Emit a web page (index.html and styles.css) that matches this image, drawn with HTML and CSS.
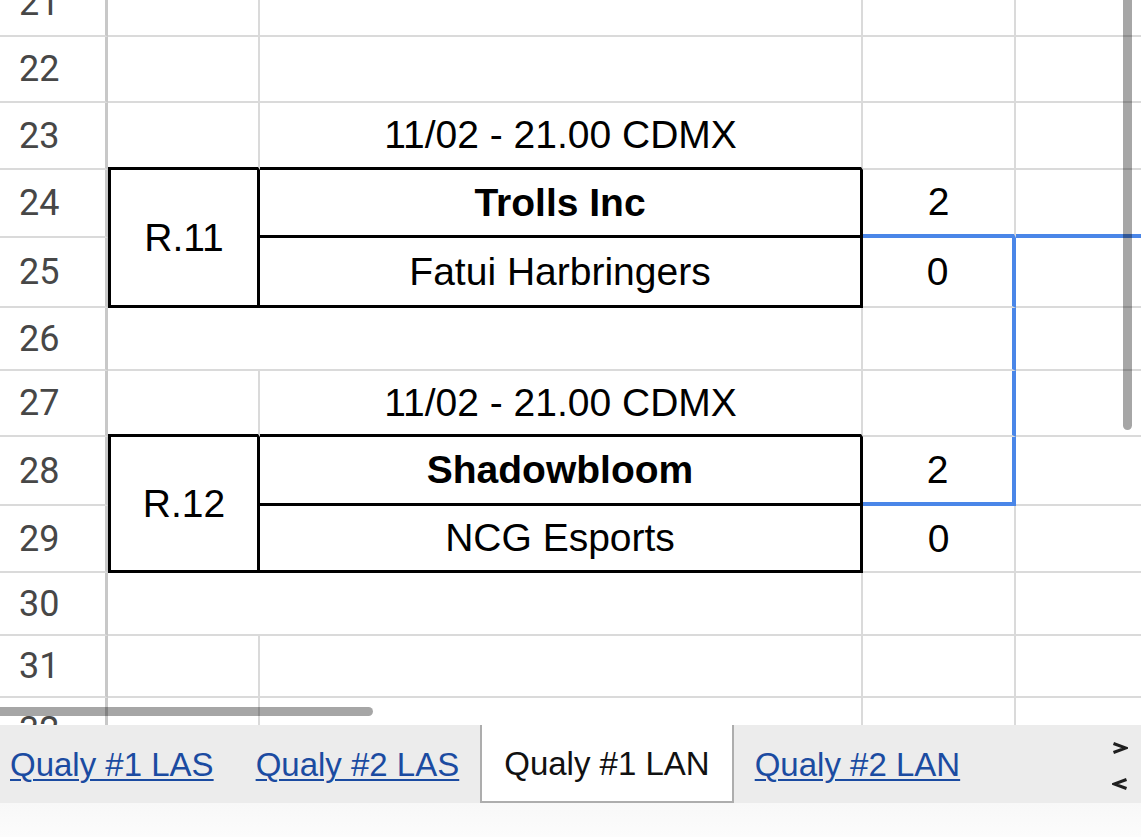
FILE: index.html
```html
<!DOCTYPE html>
<html lang="es">
<head>
<meta charset="utf-8">
<title>Qualy #1 LAN</title>
<link rel="stylesheet" href="styles.css">
</head>
<body>
<div class="sheet">
  <div class="grid">
    <!-- 21 -->
    <div class="c rh">21</div><div class="c"></div><div class="c"></div><div class="c"></div><div class="c"></div>
    <!-- 22 -->
    <div class="c rh">22</div><div class="c"></div><div class="c"></div><div class="c"></div><div class="c"></div>
    <!-- 23 -->
    <div class="c rh">23</div><div class="c kb"></div><div class="c kb">11/02 - 21.00 CDMX</div><div class="c"></div><div class="c"></div>
    <!-- 24 -->
    <div class="c rh">24</div>
    <div class="c rspan kl kr kb">R.11</div>
    <div class="c kr kb bold">Trolls Inc</div>
    <div class="c ub">2</div>
    <div class="c ub"></div>
    <!-- 25 -->
    <div class="c rh">25</div>
    <div class="c kr kb">Fatui Harbringers</div>
    <div class="c ur">0</div>
    <div class="c"></div>
    <!-- 26 -->
    <div class="c rh">26</div><div class="c cspan"></div><div class="c ur"></div><div class="c"></div>
    <!-- 27 -->
    <div class="c rh">27</div><div class="c kb"></div><div class="c kb">11/02 - 21.00 CDMX</div><div class="c ur"></div><div class="c"></div>
    <!-- 28 -->
    <div class="c rh">28</div>
    <div class="c rspan kl kr kb">R.12</div>
    <div class="c kr kb bold">Shadowbloom</div>
    <div class="c ur ub">2</div>
    <div class="c"></div>
    <!-- 29 -->
    <div class="c rh">29</div>
    <div class="c kr kb">NCG Esports</div>
    <div class="c">0</div>
    <div class="c"></div>
    <!-- 30 -->
    <div class="c rh">30</div><div class="c cspan"></div><div class="c"></div><div class="c"></div>
    <!-- 31 -->
    <div class="c rh">31</div><div class="c"></div><div class="c"></div><div class="c"></div><div class="c"></div>
    <!-- 32 -->
    <div class="c rh">32</div><div class="c"></div><div class="c"></div><div class="c"></div><div class="c"></div>
  </div>
  <div class="vthumb"></div>
  <div class="hthumb"></div>
</div>
<nav class="tabs">
  <a class="tab first" href="#">Qualy #1 LAS</a>
  <a class="tab" href="#">Qualy #2 LAS</a>
  <span class="tab active">Qualy #1 LAN</span>
  <a class="tab" href="#">Qualy #2 LAN</a>
  <div class="arrows">
    <svg class="arrow" width="16" height="12" viewBox="0 0 16 12" aria-label="siguiente"><polyline points="1.5,1.5 14,6 1.5,10.5" fill="none" stroke="#1f1f1f" stroke-width="3" stroke-linejoin="miter"/></svg>
    <svg class="arrow" width="16" height="12" viewBox="0 0 16 12" aria-label="anterior"><polyline points="14.5,1.5 2,6 14.5,10.5" fill="none" stroke="#1f1f1f" stroke-width="3" stroke-linejoin="miter"/></svg>
  </div>
</nav>
<div class="footer"></div>
</body>
</html>
```

FILE: styles.css
```css
html, body {
  margin: 0;
  padding: 0;
  background: #ffffff;
}
body {
  width: 1141px;
  height: 837px;
  overflow: hidden;
  font-family: "Liberation Sans", Arial, sans-serif;
}
.sheet {
  position: relative;
  height: 725px;
  overflow: hidden;
}
.grid {
  display: grid;
  margin-top: -29px;
  width: 1169px;
  grid-template-columns: 108px 152px 603px 153px 153px;
  grid-template-rows: 66px 66px 67px 68px 70px 63px 66px 69px 67px 63px 62px 66px;
}
.c {
  box-sizing: border-box;
  border-right: 2px solid #dadada;
  border-bottom: 2px solid #dadada;
  display: flex;
  align-items: center;
  justify-content: center;
  font-size: 39px;
  color: #000;
  white-space: nowrap;
  overflow: hidden;
}
.rh {
  justify-content: flex-start;
  padding-left: 19px;
  font-family: Roboto, "Liberation Sans", sans-serif;
  font-size: 36px;
  color: #474747;
  border-right: 3px solid #c8c8c8;
}
.bold { font-weight: bold; }
.rspan { grid-row: span 2; }
.cspan { grid-column: span 2; }
.kb { border-bottom: 3px solid #000; }
.kr { border-right: 3px solid #000; }
.kl { border-left: 3px solid #000; }
.ub { border-bottom: 4px solid #4a86e8; }
.ur { border-right: 4px solid #4a86e8; }

.vthumb {
  position: absolute;
  left: 1123px;
  top: -12px;
  width: 9px;
  height: 442px;
  border-radius: 5px;
  background: rgba(0, 0, 0, 0.35);
}
.hthumb {
  position: absolute;
  left: -12px;
  top: 707px;
  width: 385px;
  height: 9px;
  border-radius: 5px;
  background: rgba(0, 0, 0, 0.35);
}

.tabs {
  display: flex;
  height: 78px;
  background: #ececec;
  font-size: 33px;
}
.tab {
  box-sizing: border-box;
  height: 78px;
  padding: 2px 21px 0;
  line-height: 76px;
  color: #1b4ba1;
  text-decoration: underline;
  text-decoration-thickness: 2px;
  text-underline-offset: 3px;
  white-space: nowrap;
}
.tab.first { padding-left: 10px; }
.tab.active {
  padding: 2px 22px 0;
  background: #ffffff;
  color: #111;
  text-decoration: none;
  border: 2px solid #adadad;
  border-top: none;
  line-height: 74px;
}
.arrows {
  margin-left: auto;
  padding-right: 13px;
  padding-top: 17px;
  display: flex;
  flex-direction: column;
  gap: 24px;
}
.arrow {
  display: block;
}
.footer {
  height: 34px;
  background: linear-gradient(#f8f8f8, #fcfcfc);
}
```
